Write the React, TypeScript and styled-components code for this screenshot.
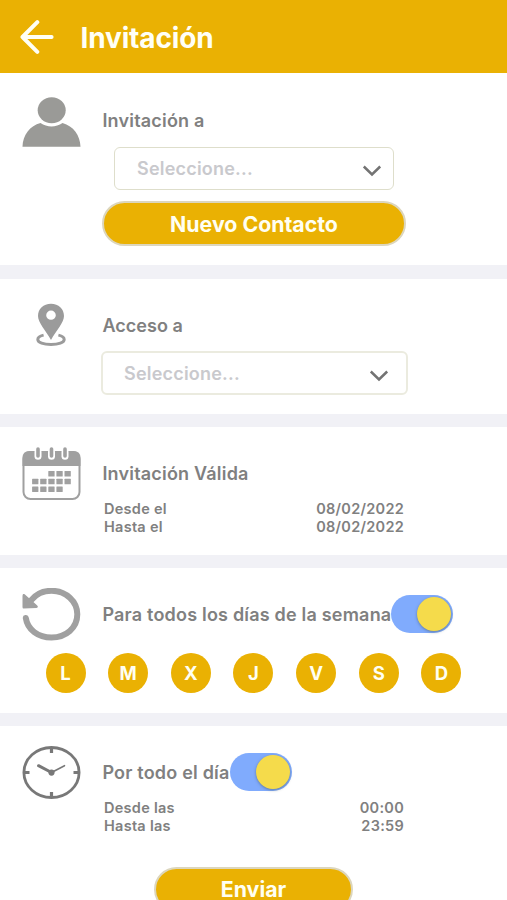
import React, { useState } from "react";
import styled, { createGlobalStyle } from "styled-components";

const GlobalStyle = createGlobalStyle`
  * { box-sizing: border-box; }
  html, body { margin: 0; height: 100%; overflow: hidden; background: #fff; }
  body { font-family: Inter, "Liberation Sans", sans-serif; color: #808080; }
  button { font: inherit; border: 0; padding: 0; background: none; cursor: pointer; }
`;

const Screen = styled.main`
  width: 507px;
  height: 900px;
  overflow: hidden;
  display: flex;
  flex-direction: column;
  background: #f1f1f6;
`;

const Header = styled.header`
  height: 73px;
  flex: none;
  display: flex;
  align-items: center;
  padding: 1px 0 0 20px;
  gap: 26.5px;
  background: #eab103;
  color: #fffff6;
`;

const BackButton = styled.button`
  width: 34px;
  height: 34px;
  svg { display: block; }
`;

const Heading = styled.h1<{ $tracking: number }>`
  margin: 2px 0 0;
  font-size: 28px;
  line-height: 34px;
  font-weight: 700;
  letter-spacing: ${(p) => p.$tracking}px;
  white-space: nowrap;
`;

const Section = styled.section<{ $height: number; $gap: number }>`
  flex: none;
  height: ${(p) => p.$height}px;
  margin-bottom: ${(p) => p.$gap}px;
  background: #fff;
`;

const Row = styled.div`
  display: grid;
  grid-template-columns: 102px 305px;
`;

const IconCell = styled.div<{ $top: number }>`
  display: flex;
  justify-content: center;
  padding-top: ${(p) => p.$top}px;
  svg { display: block; }
`;

const Body = styled.div<{ $top: number }>`
  padding-top: ${(p) => p.$top}px;
`;

const Title = styled.h2<{ $tracking?: number }>`
  margin: 0;
  padding-left: 0.4px;
  font-size: 18px;
  line-height: 25px;
  font-weight: 600;
  letter-spacing: ${(p) => p.$tracking ?? 0.2}px;
  white-space: nowrap;
`;

const TitleLine = styled.div`
  display: flex;
  align-items: center;
  height: 38px;
`;

const SelectBox = styled.button<{ $wide?: boolean; $top: number }>`
  display: flex;
  align-items: center;
  justify-content: space-between;
  width: ${(p) => (p.$wide ? 307 : 280)}px;
  height: ${(p) => (p.$wide ? 44 : 43)}px;
  margin: ${(p) => p.$top}px 0 0 ${(p) => (p.$wide ? -1 : 12)}px;
  padding: ${(p) => (p.$wide ? "1px 17px 0 21px" : "0 11.5px 0 22px")};
  border: ${(p) => (p.$wide ? "2px solid #ebebdf" : "1px solid #dedecb")};
  border-radius: 6px;
  background: #fff;
  color: #c9c9cd;
  svg { display: block; margin-top: 4px; }
`;

const Placeholder = styled.span`
  font-size: 18px;
  line-height: 24px;
  font-weight: 600;
  letter-spacing: 0.2px;
`;

const PillButton = styled.button<{ $width: number }>`
  display: block;
  width: ${(p) => p.$width}px;
  height: 45px;
  border: 2px solid #dcd6bd;
  border-radius: 23px;
  background: #eab103;
  color: #fffff2;
  font-size: 21.3px;
  line-height: 26px;
  font-weight: 650;
`;

const NewContact = styled(PillButton)`
  margin-top: 11px;
`;

const SubmitButton = styled(PillButton)`
  padding-bottom: 2px;
`;

const SubmitBar = styled.div`
  display: flex;
  justify-content: center;
  margin-top: 33px;
`;

const Details = styled.dl<{ $top: number }>`
  margin: ${(p) => p.$top}px 0 0 2px;
  width: 300px;
  font-size: 14.5px;
  line-height: 17.5px;
  font-weight: 600;
  letter-spacing: 0.27px;
  div { display: flex; justify-content: space-between; }
  dt, dd { margin: 0; }
`;

const Track = styled.button<{ $on: boolean }>`
  flex: none;
  display: flex;
  align-items: center;
  justify-content: ${(p) => (p.$on ? "flex-end" : "flex-start")};
  width: 62px;
  height: 38px;
  padding: 0 2px;
  border-radius: 19px;
  background: ${(p) => (p.$on ? "#80abfd" : "#d5d5dc")};
`;

const Knob = styled.span`
  width: 34px;
  height: 34px;
  border-radius: 50%;
  background: #f5db4b;
  box-shadow: 0 1px 3px rgba(70, 85, 90, 0.55);
`;

const Days = styled.div`
  display: flex;
  justify-content: space-between;
  width: 416px;
  margin: 11px 0 0 45.5px;
`;

const Day = styled.button<{ $on: boolean }>`
  width: 40px;
  height: 40px;
  border-radius: 50%;
  background: ${(p) => (p.$on ? "#eab103" : "#c9c9cd")};
  color: #fffff2;
  font-size: 18.5px;
  line-height: 40px;
  font-weight: 700;
`;

const Chevron = () => (
  <svg width="20" height="12" viewBox="0 0 20 12" fill="none">
    <path d="M1.8 1.5 L10 9.5 L18.2 1.5" stroke="#737373" strokeWidth="2.5" />
  </svg>
);

const PersonIcon = () => (
  <svg width="59" height="50" viewBox="0 0 59 50" fill="#9a9a97">
    <ellipse cx="29.7" cy="13.2" rx="14" ry="13" />
    <path d="M.5 49.7 C.8 38 8 28.7 18.5 26 C25 30.5 34 30.5 40.5 26 C51.5 29 58.2 38.5 58.5 49.7Z" />
  </svg>
);

const PinIcon = () => (
  <svg width="30" height="44" viewBox="0 0 30 44">
    <path d="M7.6 32.1 C3.5 33 1.8 35 1.8 36.5 C1.8 39.5 7.5 41.5 15 41.5 C22.5 41.5 28.2 39.5 28.2 36.5 C28.2 35 26.5 33 22.4 32.1" fill="none" stroke="#9b9b9b" strokeWidth="3" />
    <path fill="#9b9b9b" fillRule="evenodd" d="M15 .7 C7.4.7 2 5.9 2 12.9 C2 19.5 9.8 27.5 15 37 C20.2 27.5 28 19.5 28 12.9 C28 5.9 22.6.7 15 .7Z M15 7.6 A4.8 4.6 0 1 1 15 16.8 A4.8 4.6 0 1 1 15 7.6Z" />
  </svg>
);

const CalendarIcon = () => (
  <svg width="59" height="54" viewBox="-.5 0 59 54">
    <rect x="1" y="5" width="56" height="47" rx="7" fill="#fff" stroke="#a0a0a0" strokeWidth="2" />
    <path d="M0 19 V11 Q0 4 7 4 H51 Q58 4 58 11 V19Z" fill="#a0a0a0" />
    {[15.5, 29, 42.5].map((x) => (
      <g key={x} strokeLinecap="round">
        <path d={`M${x} 5 V9.3`} stroke="#fff" strokeWidth="7" />
        <path d={`M${x} 2 V9`} stroke="#a0a0a0" strokeWidth="3.6" />
      </g>
    ))}
    <g fill="#a0a0a0">
      {[2, 3, 4].map((c) => <rect key={c} x={9.6 + c * 8.1} y="24" width="6.3" height="5.5" rx=".5" />)}
      {[0, 1, 2, 3, 4].map((c) => <rect key={c} x={9.6 + c * 8.1} y="31.7" width="6.3" height="5.5" rx=".5" />)}
      {[0, 1, 2, 3].map((c) => <rect key={c} x={9.6 + c * 8.1} y="39.5" width="6.3" height="5.5" rx=".5" />)}
    </g>
  </svg>
);

const RepeatIcon = () => (
  <svg width="59" height="54" viewBox="-.5 0 59 54">
    <path d="M3.3 30 C5 41.5 15.5 49.5 29 49.5 C43.5 49.5 54.8 39.8 54.8 26.3 C54.8 13.3 43.5 2.8 29 2.8 C20.5 2.8 13.3 6.4 8.5 12.3" fill="none" stroke="#a0a0a0" strokeWidth="6" strokeLinecap="round" />
    <path d="M.7 6 Q2 5.5 3 7 L14.5 17.3 Q16.5 19.4 14 19.9 L1 20.5 Q0 20.5 0 19 V8 Q0 6.5 .7 6Z" fill="#a0a0a0" />
  </svg>
);

const ClockIcon = () => (
  <svg width="59" height="54" viewBox="-.5 0 59 54" fill="none" stroke="#787878">
    <ellipse cx="29" cy="26.5" rx="27.6" ry="25" strokeWidth="2.8" />
    <path d="M29 2 V7 M29 46 V51 M2 26.5 H7 M51 26.5 H56" strokeWidth="3.2" />
    <path d="M16 19.7 L29 26.5" strokeWidth="3" strokeLinecap="round" />
    <path d="M29 26.5 L42 19.7" strokeWidth="1.6" strokeLinecap="round" />
    <circle cx="29" cy="26.6" r="3.1" fill="#787878" stroke="none" />
  </svg>
);

const dayNames = ["L", "M", "X", "J", "V", "S", "D"];

const Switch = ({ on, onChange, label }: { on: boolean; onChange: () => void; label: string }) => (
  <Track type="button" role="switch" aria-checked={on} aria-label={label} $on={on} onClick={onChange}>
    <Knob />
  </Track>
);

export default function App() {
  const [everyDay, setEveryDay] = useState(true);
  const [allDay, setAllDay] = useState(true);
  const [selected, setSelected] = useState<string[]>(dayNames);
  const toggleDay = (d: string) =>
    setSelected((s) => (s.includes(d) ? s.filter((v) => v !== d) : [...s, d]));

  return (
    <>
      <GlobalStyle />
      <Screen>
        <Header>
          <BackButton type="button" aria-label="Volver">
            <svg width="34" height="34" viewBox="0 0 34 34" fill="none" stroke="#fffff6" strokeWidth="4" strokeLinecap="round" strokeLinejoin="round">
              <path d="M17.3 2.2 L2.5 17 L17.3 31.8 M2.5 17 H31.6" />
            </svg>
          </BackButton>
          <Heading $tracking={-0.15}>Invitación</Heading>
        </Header>

        <Section $height={192} $gap={14}>
          <Row>
            <IconCell $top={24}><PersonIcon /></IconCell>
            <Body $top={35}>
              <Title>Invitación a</Title>
              <SelectBox type="button" $top={14}>
                <Placeholder>Seleccione...</Placeholder>
                <Chevron />
              </SelectBox>
              <NewContact type="button" $width={304}>Nuevo Contacto</NewContact>
            </Body>
          </Row>
        </Section>

        <Section $height={135} $gap={13}>
          <Row>
            <IconCell $top={24}><PinIcon /></IconCell>
            <Body $top={34}>
              <Title $tracking={0.05}>Acceso a</Title>
              <SelectBox type="button" $wide $top={13}>
                <Placeholder>Seleccione...</Placeholder>
                <Chevron />
              </SelectBox>
            </Body>
          </Row>
        </Section>

        <Section $height={128} $gap={13}>
          <Row>
            <IconCell $top={20}><CalendarIcon /></IconCell>
            <Body $top={34}>
              <Title>Invitación Válida</Title>
              <Details $top={14}>
                <div><dt>Desde el</dt><dd>08/02/2022</dd></div>
                <div><dt>Hasta el</dt><dd>08/02/2022</dd></div>
              </Details>
            </Body>
          </Row>
        </Section>

        <Section $height={145} $gap={13}>
          <Row>
            <IconCell $top={20}><RepeatIcon /></IconCell>
            <Body $top={27}>
              <TitleLine>
                <Title>Para todos los días de la semana</Title>
                <Switch label="Todos los días" on={everyDay} onChange={() => setEveryDay(!everyDay)} />
              </TitleLine>
            </Body>
          </Row>
          <Days>
            {dayNames.map((d) => (
              <Day type="button" key={d} $on={selected.includes(d)} onClick={() => toggleDay(d)}>{d}</Day>
            ))}
          </Days>
        </Section>

        <Section $height={200} $gap={0}>
          <Row>
            <IconCell $top={20}><ClockIcon /></IconCell>
            <Body $top={27}>
              <TitleLine>
                <Title>Por todo el día</Title>
                <Switch label="Todo el día" on={allDay} onChange={() => setAllDay(!allDay)} />
              </TitleLine>
              <Details $top={8}>
                <div><dt>Desde las</dt><dd>00:00</dd></div>
                <div><dt>Hasta las</dt><dd>23:59</dd></div>
              </Details>
            </Body>
          </Row>
          <SubmitBar>
            <SubmitButton type="button" $width={199}>Enviar</SubmitButton>
          </SubmitBar>
        </Section>
      </Screen>
    </>
  );
}
